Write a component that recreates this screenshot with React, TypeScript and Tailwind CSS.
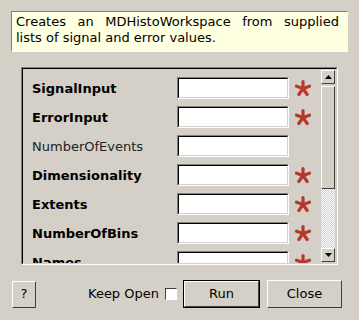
import React from "react";

const rows = [
  { name: "SignalInput", bold: true, req: true },
  { name: "ErrorInput", bold: true, req: true },
  { name: "NumberOfEvents", bold: false, req: false },
  { name: "Dimensionality", bold: true, req: true },
  { name: "Extents", bold: true, req: true },
  { name: "NumberOfBins", bold: true, req: true },
  { name: "Names", bold: true, req: true },
];

function Star() {
  return (
    <svg width="18" height="18" viewBox="0 0 18 18">
      <g stroke="#b5392c" strokeWidth="3.2" strokeLinecap="round">
        <line x1="9" y1="9.5" x2="9" y2="2.5" />
        <line x1="9" y1="9.5" x2="2.5" y2="7.2" />
        <line x1="9" y1="9.5" x2="15.5" y2="7.2" />
        <line x1="9" y1="9.5" x2="4.8" y2="15.5" />
        <line x1="9" y1="9.5" x2="13.2" y2="15.5" />
      </g>
    </svg>
  );
}

function Arrow({ up }: { up: boolean }) {
  return (
    <div className="w-[14px] h-[14px] bg-[#d4d0c8] border border-t-white border-l-white border-r-[#404040] border-b-[#404040] flex items-center justify-center">
      <svg width="7" height="4" viewBox="0 0 7 4">
        {up ? <polygon points="3.5,0 7,4 0,4" fill="#000" /> : <polygon points="0,0 7,0 3.5,4" fill="#000" />}
      </svg>
    </div>
  );
}

export default function App() {
  return (
    <div
      className="w-[359px] h-[320px] bg-[#d4d0c8] text-black flex flex-col overflow-hidden"
      style={{ fontFamily: '"DejaVu Sans", sans-serif' }}
    >
      <div className="pt-[11px] pl-[11px] pr-[11px]">
        <div className="h-[41px] bg-[#ffffe1] border border-t-[#808080] border-l-[#808080] border-r-white border-b-white pl-[4px] pr-[8px] pt-[2px] text-[13px] leading-[16px] text-justify">
          Creates an MDHistoWorkspace from supplied lists of signal and error values.
        </div>
      </div>

      <div className="ml-[21px] mt-[15px] w-[317px] h-[198px] border border-t-[#808080] border-l-[#808080] border-r-white border-b-white">
        <div className="h-full border border-t-[#000] border-l-[#000] border-r-[#d4d0c8] border-b-[#d4d0c8] flex">
          <div className="flex-1 overflow-hidden pt-[8px] pl-[9px] flex flex-col gap-[7px]">
            {rows.map((r) => (
              <div key={r.name} className="flex items-center h-[22px] shrink-0">
                <div className={"w-[145px] text-[13px] pt-[1px] " + (r.bold ? "font-bold" : "font-normal text-[#222]")}>
                  {r.name}
                </div>
                <div className="w-[112px] h-[22px] border border-t-[#808080] border-l-[#808080] border-r-white border-b-white">
                  <div className="h-full bg-white border border-t-[#000] border-l-[#000] border-r-[#d4d0c8] border-b-[#d4d0c8]" />
                </div>
                <div className="w-[28px] flex justify-center">{r.req && <Star />}</div>
              </div>
            ))}
          </div>
          <div className="w-[14px] mr-[1px] mt-[1px] mb-[1px] flex flex-col">
            <Arrow up />
            <div className="h-[103px] mt-[2px] bg-[#d4d0c8] border border-t-white border-l-white border-r-[#404040] border-b-[#404040]" />
            <div className="flex-1 bg-[repeating-conic-gradient(#d4d0c8_0_25%,#ffffff_0_50%)] bg-[length:2px_2px]" />
            <Arrow up={false} />
          </div>
        </div>
      </div>

      <div className="mt-[15px] flex items-center pl-[12px] text-[13px]">
        <div className="w-[24px] h-[27px] border border-t-white border-l-white border-r-[#404040] border-b-[#404040] flex items-center justify-center">
          ?
        </div>
        <div className="ml-[52px] flex items-center">
          <span>Keep Open</span>
          <div className="ml-[6px] w-[12px] h-[12px] bg-white border border-t-[#404040] border-l-[#404040] border-r-white border-b-white" />
        </div>
        <div className="ml-[6px] w-[77px] h-[28px] border border-black">
          <div className="h-full border border-t-white border-l-white border-r-[#404040] border-b-[#404040] flex items-center justify-center">
            Run
          </div>
        </div>
        <div className="ml-[7px] w-[75px] h-[28px] border border-t-white border-l-white border-r-[#404040] border-b-[#404040] flex items-center justify-center">
          Close
        </div>
      </div>
    </div>
  );
}
